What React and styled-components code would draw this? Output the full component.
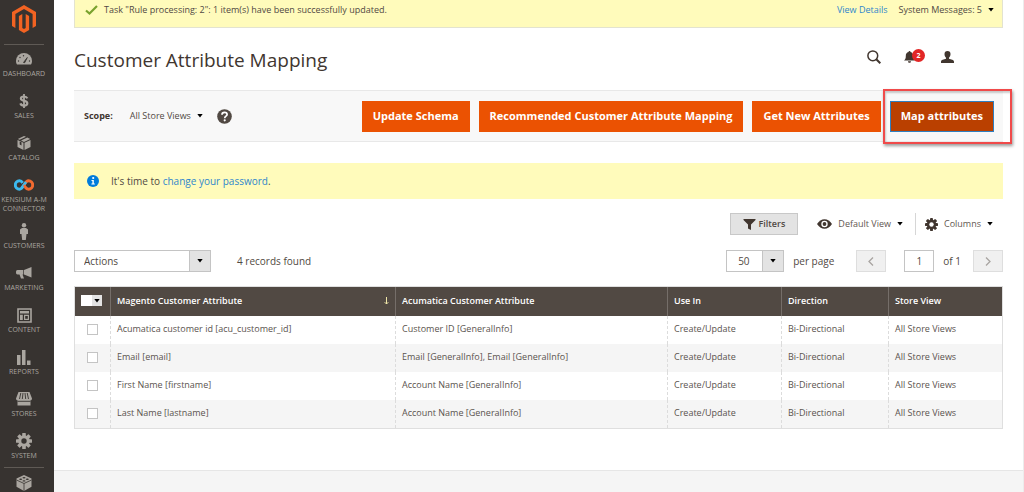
import React, { useState } from 'react';
import styled, { createGlobalStyle, css } from 'styled-components';

const GlobalStyle = createGlobalStyle`
  * {
    box-sizing: border-box;
  }
  body {
    margin: 0;
    background: #fff;
    color: #514943;
    font-family: "Open Sans", "Noto Sans", sans-serif;
    font-size: 9px;
    line-height: 14px;
  }
  button, input, select {
    font: inherit;
    color: inherit;
  }
  svg {
    display: block;
    flex: none;
  }
`;

const Page = styled.div`
  display: flex;
  height: 100vh;
  overflow: hidden;
`;

const Sidebar = styled.nav`
  display: flex;
  flex-direction: column;
  align-items: center;
  flex: none;
  width: 54px;
  padding-right: 6px;
  overflow: hidden;
  background: #373330;
`;

const Logo = styled.a`
  display: block;
  padding: 5px 0 11px;
`;

const Separator = styled.hr`
  flex: none;
  width: 40px;
  height: 1px;
  margin: 0;
  border: 0;
  background: #5f5a55;
`;

const MenuLink = styled.a`
  display: flex;
  flex-direction: column;
  align-items: center;
  min-height: 42px;
  padding-bottom: 8px;
  color: #aaa6a0;
  font-size: 7px;
  line-height: 9px;
  text-align: center;
  text-decoration: none;
  text-transform: uppercase;
  white-space: pre;

  &:hover {
    color: #fff;
  }
`;

const Menu = styled.ul`
  flex: none;
  width: 100%;
  margin: 0;
  padding: 4px 0 0;
  list-style: none;

  li:last-child ${MenuLink} {
    min-height: 36px;
    padding-bottom: 0;
  }
`;

const IconSlot = styled.span`
  display: flex;
  align-items: center;
  justify-content: center;
  height: 20px;
`;

const PartnersLink = styled(MenuLink)`
  padding-top: 5px;
`;

const Main = styled.div`
  display: flex;
  flex-direction: column;
  flex: 1;
  min-width: 0;
  border-right: 1px solid #ececec;
`;

const Content = styled.main`
  flex: none;
  padding: 0 20px 41px;
`;

const SystemMessages = styled.div`
  display: flex;
  align-items: center;
  gap: 6px;
  height: 28px;
  padding: 0 8px 7px 10px;
  border: 1px solid #e3e3d0;
  border-top: 0;
  background: #fffbbb;
`;

const MessageActions = styled.div`
  display: flex;
  align-items: center;
  gap: 11px;
  margin-left: auto;
`;

const TextLink = styled.a`
  color: #2f86cc;
  text-decoration: none;

  &:hover {
    text-decoration: underline;
  }
`;

const PlainButton = styled.button`
  display: flex;
  align-items: center;
  gap: 6px;
  padding: 0;
  border: 0;
  background: none;
  cursor: pointer;
`;

const PageHeader = styled.header`
  display: flex;
  align-items: center;
  justify-content: space-between;
  height: 62px;
  padding: 2px 49px 0 0;
`;

const Title = styled.h1`
  margin: 0;
  color: #41362f;
  font-size: 19px;
  font-weight: 400;
  line-height: 26px;
`;

const HeaderTools = styled.div`
  display: flex;
  align-items: center;
  gap: 23px;
  height: 26px;
  margin-bottom: 7px;
`;

const BellButton = styled(PlainButton)`
  position: relative;
  margin-right: 3px;
`;

const Badge = styled.span`
  position: absolute;
  top: -2px;
  left: 8px;
  width: 13px;
  height: 13px;
  border-radius: 50%;
  background: #e22626;
  color: #fff;
  font-size: 7px;
  font-weight: 700;
  line-height: 13px;
  text-align: center;
`;

const ActionsBar = styled.div`
  display: flex;
  align-items: center;
  height: 52px;
  padding: 0 9px 0 10px;
  border-top: 1px solid #e8e8e8;
  border-bottom: 1px solid #e8e8e8;
  background: #f8f8f8;
`;

const ScopeLabel = styled.span`
  margin-right: 17px;
  color: #41362f;
  font-weight: 700;
`;

const HelpButton = styled(PlainButton)`
  margin-left: 14px;
`;

const Buttons = styled.div`
  display: flex;
  align-items: center;
  gap: 9px;
  margin-left: auto;
`;

const PrimaryButton = styled.button`
  height: 31px;
  padding: 0 10px;
  border: 1px solid #eb5202;
  background: #eb5202;
  color: #fff;
  font-size: 11px;
  font-weight: 700;
  line-height: 16px;
  white-space: nowrap;
  cursor: pointer;

  ${({ $active }) => $active && css`
    border-color: #2f7fc0;
    background: #ba4000;
  `}
`;

const Callout = styled.span`
  position: relative;
  display: flex;

  &::after {
    content: '';
    position: absolute;
    inset: -12px -18px -12px -7px;
    border: 2px solid #f04a4a;
    box-shadow: 1px 2px 3px rgba(0, 0, 0, 0.4), inset 1px 2px 2px rgba(0, 0, 0, 0.2);
    pointer-events: none;
  }
`;

const Notice = styled.div`
  display: flex;
  align-items: center;
  gap: 12px;
  height: 36px;
  margin-top: 21px;
  padding: 0 13px;
  background: #fffbbb;
  font-size: 10px;
`;

const Toolbar = styled.div`
  display: flex;
  align-items: center;
  height: 22px;
  margin-top: 14px;
  margin-bottom: ${({ $last }) => ($last ? '14px' : '15px')};
  font-size: ${({ $last }) => ($last ? '10px' : '9px')};
`;

const Push = styled.div`
  display: flex;
  align-items: center;
  height: 100%;
  margin-left: auto;
`;

const FiltersButton = styled(PlainButton)`
  justify-content: center;
  gap: 2px;
  width: 68px;
  height: 22px;
  margin-right: 19px;
  border: 1px solid #c8c8c8;
  background: #e3e3e3;
  font-weight: 600;
`;

const ViewButton = styled(PlainButton)`
  height: 100%;
  padding: 0 ${({ $end }) => ($end ? '10px' : '12px')} 0 ${({ $end }) => ($end ? '9px' : '0')};
  border-left: ${({ $end }) => ($end ? '1px solid #d6d6d6' : '0')};
  color: #5f5751;

  svg:first-child {
    color: #41362f;
  }
`;

const SelectBox = styled.span`
  position: relative;
  display: block;
  width: ${({ $width }) => $width};
  height: 22px;

  select {
    width: 100%;
    height: 100%;
    padding: 0 30px 0 ${({ $pad }) => $pad};
    border: 1px solid #c4c4c4;
    border-radius: 0;
    background: #fff;
    appearance: none;
  }
`;

const SelectArrow = styled.span`
  position: absolute;
  top: 0;
  right: 0;
  display: flex;
  align-items: center;
  justify-content: center;
  width: 22px;
  height: 100%;
  border: 1px solid #c4c4c4;
  background: #e3e3e3;
  pointer-events: none;
`;

const Records = styled.span`
  margin-left: 26px;
`;

const PerPage = styled.label`
  display: flex;
  align-items: center;
  gap: 9px;
  margin-right: 22px;
`;

const PagerButton = styled.button`
  display: flex;
  align-items: center;
  justify-content: center;
  width: 30px;
  height: 22px;
  padding: 0;
  border: 1px solid #dedede;
  background: #f0f0f0;
  color: #a8a4a1;
`;

const PageLabel = styled.label`
  display: flex;
  align-items: center;
  gap: 9px;
  margin: 0 12px 0 18px;
`;

const PageInput = styled.input`
  width: 30px;
  height: 22px;
  padding: 0;
  border: 1px solid #c4c4c4;
  text-align: center;
`;

const Grid = styled.table`
  width: 100%;
  border: 1px solid #dfdfdf;
  border-collapse: separate;
  border-spacing: 0;
  table-layout: fixed;
`;

const Col = styled.col`
  width: ${({ $width }) => $width || 'auto'};
`;

const HeadCell = styled.th`
  height: 29px;
  padding: 0 6px 2px;
  border-left: 1px solid #756e69;
  background: #514943;
  color: #fff;
  font-weight: 600;
  text-align: left;

  &:first-child {
    border-left: 0;
  }
`;

const HeadInner = styled.span`
  display: flex;
  align-items: center;
  justify-content: space-between;
`;

const MultiCheck = styled.span`
  display: flex;
  width: 21px;
  height: 11px;
  background: #fff;

  input {
    flex: 1;
    min-width: 0;
    margin: 0;
    appearance: none;
  }

  button {
    display: flex;
    align-items: center;
    justify-content: center;
    flex: none;
    width: 10px;
    padding: 0;
    border: 0;
    background: #e3e3e3;
    color: #000;
  }
`;

const Row = styled.tr`
  background: #fff;

  &:nth-child(even) {
    background: #f5f5f5;
  }
`;

const Cell = styled.td`
  height: 28px;
  padding: 0 6px 2px;
  border-left: 1px dashed #dcdcdc;
  color: #5a534e;

  &:first-child {
    border-left: 0;
    padding: 0 12px 2px;
  }
`;

const Tick = styled.input`
  display: block;
  width: 11px;
  height: 11px;
  margin: 0;
  border: 1px solid #c4c4c4;
  background: #fff;
  appearance: none;

  &:checked {
    background: #514943;
  }
`;

const Footer = styled.footer`
  flex: 1;
  border-top: 1px solid #e6e6e6;
  background: #f5f5f5;
`;

const Caret = () => (
    <svg width="6" height="4" viewBox="0 0 6 4">
        <path d="M.3 0h5.400L3 3.600z" fill="#000" />
    </svg>
);

const MagentoLogo = () => (
    <svg width="24" height="28" viewBox="0 0 24 28" fill="#f26322">
        <path d="M12 0L0 7v14l3.400 2V9L12 4l8.600 5v14l3.400-2V7z" />
        <path d="M13.700 23L12 24l-1.700-1V9L6.900 11v14l5.100 3 5.100-3V11l-3.400-2z" />
    </svg>
);

const DashboardIcon = () => (
    <svg width="16" height="12" viewBox="0 0 16 12">
        <path d="M0 8a8 8 0 0 1 16 0c0 1.500-.4 2.600-1 3.500H1C.4 10.600 0 9.500 0 8z" fill="currentColor" />
        <path d="M7.500 9.500L11.300 4.500 8.700 9.700z" fill="#373330" stroke="#373330" strokeWidth=".8" />
        <g fill="#373330">
            <circle cx="2.500" cy="8" r=".7" />
            <circle cx="4" cy="4.500" r=".7" />
            <circle cx="7.500" cy="2.700" r=".7" />
            <circle cx="13.500" cy="8" r=".7" />
        </g>
    </svg>
);

const DollarIcon = () => (
    <svg width="10" height="14" viewBox="0 0 10 14" fill="none" stroke="currentColor">
        <path d="M8.300 4.300C7.800 3 6.700 2.500 5 2.500c-1.900 0-3.100.8-3.100 2.100C1.900 7.800 8.300 6 8.300 9.300c0 1.400-1.300 2.300-3.300 2.300-1.900 0-3.200-.8-3.600-2.200" strokeWidth="2.200" />
        <path d="M5 0v14" strokeWidth="1.800" />
    </svg>
);

const BoxIcon = () => (
    <svg width="14" height="14" viewBox="0 0 14 14" fill="currentColor">
        <path d="M7 0l2 .8-6.300 2.900L.8 3zM10.300 1.400L13.200 3 7 6 4 4.500z" />
        <path d="M.5 4l6 2.800V14l-6-3zM13.500 4l-6 2.800V14l6-3z" />
        <path d="M2.700 5.500v3l1.800.9V6.300z" fill="#373330" />
    </svg>
);

const ConnectorIcon = () => (
    <svg width="20" height="12" viewBox="0 0 20 12" fill="none" strokeWidth="3">
        <path d="M10 6C8.500 8.500 7.500 10.200 5.500 10.200a4.200 4.200 0 0 1 0-8.400c1.400 0 2.400.8 3.200 2" stroke="#3cb9ee" />
        <path d="M10 6c1.500-2.500 2.500-4.200 4.500-4.200a4.200 4.200 0 0 1 0 8.400c-1.400 0-2.400-.8-3.200-2" stroke="#f26a30" />
        <path d="M7.800 8.800L12 3" stroke="#3cb9ee" strokeWidth="2.600" />
        <path d="M10 6l1.600 2.600" stroke="#f26a30" strokeWidth="2.400" />
    </svg>
);

const PersonIcon = () => (
    <svg width="8" height="17" viewBox="0 0 8 17" fill="currentColor">
        <circle cx="4" cy="2.200" r="2.200" />
        <path d="M2 5h4l2 1.500V11H6.500l-.7 6H2.200l-.7-6H0V6.500z" />
    </svg>
);

const MegaphoneIcon = () => (
    <svg width="16" height="12" viewBox="0 0 16 12" fill="currentColor">
        <path d="M15.500 0v10.500L8 7.500V3z" />
        <path d="M7.300 3v4.500H6.500L8 11.500H5L3.500 7.500H1.500C.5 7.500 0 6.500 0 5.200S.5 3 1.500 3z" />
    </svg>
);

const ContentIcon = () => (
    <svg width="15" height="15" viewBox="0 0 15 15">
        <path d="M1 1h13v13H1z" fill="none" stroke="currentColor" strokeWidth="1.600" />
        <path d="M3 3h9v2.500H3zM3 6.700h2.800V12H3zM7 6.700h5V12H7z" fill="currentColor" />
        <path d="M8.200 8h2.600v2.800H8.200z" fill="#373330" />
    </svg>
);

const ReportsIcon = () => (
    <svg width="14" height="15" viewBox="0 0 14 15" fill="currentColor">
        <path d="M0 5h3.500v10H0zM5 0h3.500v15H5zM10 10.500h3.500V15H10z" />
    </svg>
);

const StoresIcon = () => (
    <svg width="16" height="14" viewBox="0 0 16 14">
        <path d="M2.500 0h11L16 6.500c0 1-.6 1.800-1.500 1.800V13.500h-13V8.300C.6 8.300 0 7.500 0 6.500z" fill="currentColor" />
        <path d="M4.800 1L3.500 7M7 1L6.300 7M9 1l.7 6M11.200 1l1.300 6M1.500 9.300h13" stroke="#373330" strokeWidth=".9" />
    </svg>
);

const GearIcon = ({ size, hole }) => (
    <svg width={ size } height={ size } viewBox="0 0 16 16">
        <g fill="currentColor">
            { [0, 45, 90, 135].map(angle => (
                <rect key={ angle } x="6.200" y="0" width="3.600" height="16" rx=".6" transform={ `rotate(${ angle } 8 8)` } />
            )) }
            <circle cx="8" cy="8" r="5.800" />
        </g>
        <circle cx="8" cy="8" r="2.700" fill={ hole } />
    </svg>
);

const PartnersIcon = () => (
    <svg width="16" height="16" viewBox="0 0 16 16">
        <path d="M8 0l7.500 3.500v8.300L8 16 .5 11.800V3.500z" fill="currentColor" />
        <path d="M.5 5L8 8.500 15.500 5M8 8.500V16" fill="none" stroke="#373330" strokeWidth=".8" />
        <g fill="#373330">
            <ellipse cx="8" cy="2.800" rx="1.500" ry=".7" />
            <ellipse cx="4.700" cy="4.300" rx="1.500" ry=".7" />
            <ellipse cx="11.300" cy="4.300" rx="1.500" ry=".7" />
            <ellipse cx="8" cy="5.900" rx="1.500" ry=".7" />
        </g>
    </svg>
);

const CheckIcon = () => (
    <svg width="13" height="10" viewBox="0 0 13 10">
        <path d="M1 5.500l3.500 3L12 1" fill="none" stroke="#79a22e" strokeWidth="2.200" />
    </svg>
);

const SearchIcon = () => (
    <svg width="14" height="14" viewBox="0 0 14 14" fill="none" stroke="#41362f">
        <circle cx="5.800" cy="5.800" r="4.900" strokeWidth="1.500" />
        <path d="M9.300 9.300l4 4" strokeWidth="2" />
    </svg>
);

const BellIcon = () => (
    <svg width="11" height="12" viewBox="0 0 11 12" fill="#41362f">
        <path d="M5.500 0c.6 0 1 .4 1 .9 2 .5 2.700 2 2.700 4 0 2.500.5 3.600 1.800 4.600H0c1.300-1 1.800-2.100 1.800-4.600 0-2 .7-3.500 2.700-4 0-.5.400-.9 1-.9zM4 10.200h3c0 1-.7 1.600-1.500 1.600S4 11.200 4 10.200z" />
    </svg>
);

const UserIcon = () => (
    <svg width="13" height="12" viewBox="0 0 13 12" fill="#41362f">
        <path d="M6.500 0C8.500 0 9.500 1.300 9.500 3c0 1.600-.7 3-1.500 3.700v1.100c2 .5 5 1 5 3V12H0v-1.200c0-2 3-2.500 5-3V6.700C4.200 6 3.500 4.600 3.500 3c0-1.700 1-3 3-3z" />
    </svg>
);

const HelpIcon = () => (
    <svg width="15" height="15" viewBox="0 0 15 15">
        <circle cx="7.500" cy="7.500" r="7.300" fill="#514943" />
        <path d="M5 5.700c0-1.500 1-2.400 2.500-2.400s2.600.8 2.600 2.200c0 1.700-2.400 1.700-2.400 3.700" fill="none" stroke="#fff" strokeWidth="1.700" />
        <circle cx="7.700" cy="11.300" r="1.100" fill="#fff" />
    </svg>
);

const InfoIcon = () => (
    <svg width="12" height="12" viewBox="0 0 12 12">
        <circle cx="6" cy="6" r="6" fill="#007bdb" />
        <path d="M4.500 5h2.300v3.500h1v1H4.400v-1h1V6h-.9z" fill="#fff" />
        <circle cx="6.200" cy="3" r="1.100" fill="#fff" />
    </svg>
);

const FunnelIcon = () => (
    <svg width="13" height="11" viewBox="0 0 13 11">
        <path d="M.5 0h12v1L8 5.500V11L5 9.500v-4L.5 1z" fill="#41362f" />
    </svg>
);

const EyeIcon = () => (
    <svg width="15" height="10" viewBox="0 0 15 10">
        <path d="M0 5c2-3 4.500-4.800 7.500-4.800S13 2 15 5c-2 3-4.500 4.800-7.500 4.800S2 8 0 5z" fill="currentColor" />
        <circle cx="7.500" cy="5" r="3.200" fill="#fff" />
        <circle cx="7.500" cy="5" r="1.900" fill="currentColor" />
    </svg>
);

const Chevron = ({ right }) => (
    <svg width="6" height="9" viewBox="0 0 6 9" fill="none" stroke="currentColor" strokeWidth="1.300">
        <path d={ right ? 'M1 .5l4 4-4 4' : 'M5 .5l-4 4 4 4' } />
    </svg>
);

const SortArrow = () => (
    <svg width="5" height="8" viewBox="0 0 5 8" fill="none" stroke="#efe6a8">
        <path d="M2.500 0v7M.7 5.200l1.800 1.800 1.800-1.800" />
    </svg>
);

const menuItems = [
    { label: 'Dashboard', icon: <DashboardIcon /> },
    { label: 'Sales', icon: <DollarIcon /> },
    { label: 'Catalog', icon: <BoxIcon /> },
    { label: 'Kensium A-M\nConnector', icon: <ConnectorIcon /> },
    { label: 'Customers', icon: <PersonIcon /> },
    { label: 'Marketing', icon: <MegaphoneIcon /> },
    { label: 'Content', icon: <ContentIcon /> },
    { label: 'Reports', icon: <ReportsIcon /> },
    { label: 'Stores', icon: <StoresIcon /> },
    { label: 'System', icon: <GearIcon size={ 16 } hole="#373330" /> },
];

const rows = [
    ['Acumatica customer id [acu_customer_id]', 'Customer ID [GeneralInfo]'],
    ['Email [email]', 'Email [GeneralInfo], Email [GeneralInfo]'],
    ['First Name [firstname]', 'Account Name [GeneralInfo]'],
    ['Last Name [lastname]', 'Account Name [GeneralInfo]'],
];

const App = () => {
    const [selected, setSelected] = useState([]);

    const toggle = (name) => {
        setSelected(selected.includes(name) ? selected.filter(n => n !== name) : [...selected, name]);
    };

    const toggleAll = () => {
        setSelected(selected.length === rows.length ? [] : rows.map(row => row[0]));
    };

    return (
        <Page>
            <GlobalStyle />
            <Sidebar>
                <Logo href="#" aria-label="Magento"><MagentoLogo /></Logo>
                <Separator />
                <Menu>
                    { menuItems.map(item => (
                        <li key={ item.label }>
                            <MenuLink href="#">
                                <IconSlot>{ item.icon }</IconSlot>
                                { item.label }
                            </MenuLink>
                        </li>
                    )) }
                </Menu>
                <Separator />
                <PartnersLink href="#" aria-label="Partners">
                    <IconSlot><PartnersIcon /></IconSlot>
                </PartnersLink>
            </Sidebar>
            <Main>
                <Content>
                    <SystemMessages>
                        <CheckIcon />
                        <span>Task "Rule processing: 2": 1 item(s) have been successfully updated.</span>
                        <MessageActions>
                            <TextLink href="#">View Details</TextLink>
                            <PlainButton>System Messages: 5 <Caret /></PlainButton>
                        </MessageActions>
                    </SystemMessages>
                    <PageHeader>
                        <Title>Customer Attribute Mapping</Title>
                        <HeaderTools>
                            <PlainButton aria-label="Search"><SearchIcon /></PlainButton>
                            <BellButton aria-label="Notifications">
                                <BellIcon />
                                <Badge>2</Badge>
                            </BellButton>
                            <PlainButton aria-label="Account"><UserIcon /></PlainButton>
                        </HeaderTools>
                    </PageHeader>
                    <ActionsBar>
                        <ScopeLabel id="scope">Scope:</ScopeLabel>
                        <PlainButton aria-describedby="scope">All Store Views <Caret /></PlainButton>
                        <HelpButton aria-label="Help"><HelpIcon /></HelpButton>
                        <Buttons>
                            <PrimaryButton>Update Schema</PrimaryButton>
                            <PrimaryButton>Recommended Customer Attribute Mapping</PrimaryButton>
                            <PrimaryButton>Get New Attributes</PrimaryButton>
                            <Callout>
                                <PrimaryButton $active>Map attributes</PrimaryButton>
                            </Callout>
                        </Buttons>
                    </ActionsBar>
                    <Notice>
                        <InfoIcon />
                        <span>It's time to <TextLink href="#">change your password</TextLink>.</span>
                    </Notice>
                    <Toolbar>
                        <Push>
                            <FiltersButton><FunnelIcon />Filters</FiltersButton>
                            <ViewButton><EyeIcon />Default View <Caret /></ViewButton>
                            <ViewButton $end><GearIcon size={ 13 } hole="#fff" />Columns <Caret /></ViewButton>
                        </Push>
                    </Toolbar>
                    <Toolbar $last>
                        <SelectBox $width="137px" $pad="9px">
                            <select aria-label="Actions">
                                <option>Actions</option>
                            </select>
                            <SelectArrow><Caret /></SelectArrow>
                        </SelectBox>
                        <Records>4 records found</Records>
                        <Push>
                            <PerPage>
                                <SelectBox $width="58px" $pad="11px">
                                    <select>
                                        <option>50</option>
                                    </select>
                                    <SelectArrow><Caret /></SelectArrow>
                                </SelectBox>
                                per page
                            </PerPage>
                            <PagerButton aria-label="Previous page" disabled><Chevron /></PagerButton>
                            <PageLabel>
                                <PageInput type="text" defaultValue="1" />
                                of 1
                            </PageLabel>
                            <PagerButton aria-label="Next page" disabled><Chevron right /></PagerButton>
                        </Push>
                    </Toolbar>
                    <Grid>
                        <colgroup>
                            <Col $width="35px" />
                            <Col />
                            <Col $width="272px" />
                            <Col $width="114px" />
                            <Col $width="107px" />
                            <Col $width="114px" />
                        </colgroup>
                        <thead>
                            <tr>
                                <HeadCell>
                                    <MultiCheck>
                                        <input
                                            type="checkbox"
                                            aria-label="Select all"
                                            checked={ selected.length === rows.length }
                                            onChange={ toggleAll }
                                        />
                                        <button aria-label="Selection options"><Caret /></button>
                                    </MultiCheck>
                                </HeadCell>
                                <HeadCell><HeadInner>Magento Customer Attribute <SortArrow /></HeadInner></HeadCell>
                                <HeadCell>Acumatica Customer Attribute</HeadCell>
                                <HeadCell>Use In</HeadCell>
                                <HeadCell>Direction</HeadCell>
                                <HeadCell>Store View</HeadCell>
                            </tr>
                        </thead>
                        <tbody>
                            { rows.map(([name, target]) => (
                                <Row key={ name }>
                                    <Cell>
                                        <Tick
                                            type="checkbox"
                                            aria-label={ name }
                                            checked={ selected.includes(name) }
                                            onChange={ () => toggle(name) }
                                        />
                                    </Cell>
                                    <Cell>{ name }</Cell>
                                    <Cell>{ target }</Cell>
                                    <Cell>Create/Update</Cell>
                                    <Cell>Bi-Directional</Cell>
                                    <Cell>All Store Views</Cell>
                                </Row>
                            )) }
                        </tbody>
                    </Grid>
                </Content>
                <Footer />
            </Main>
        </Page>
    );
};

export default App;
